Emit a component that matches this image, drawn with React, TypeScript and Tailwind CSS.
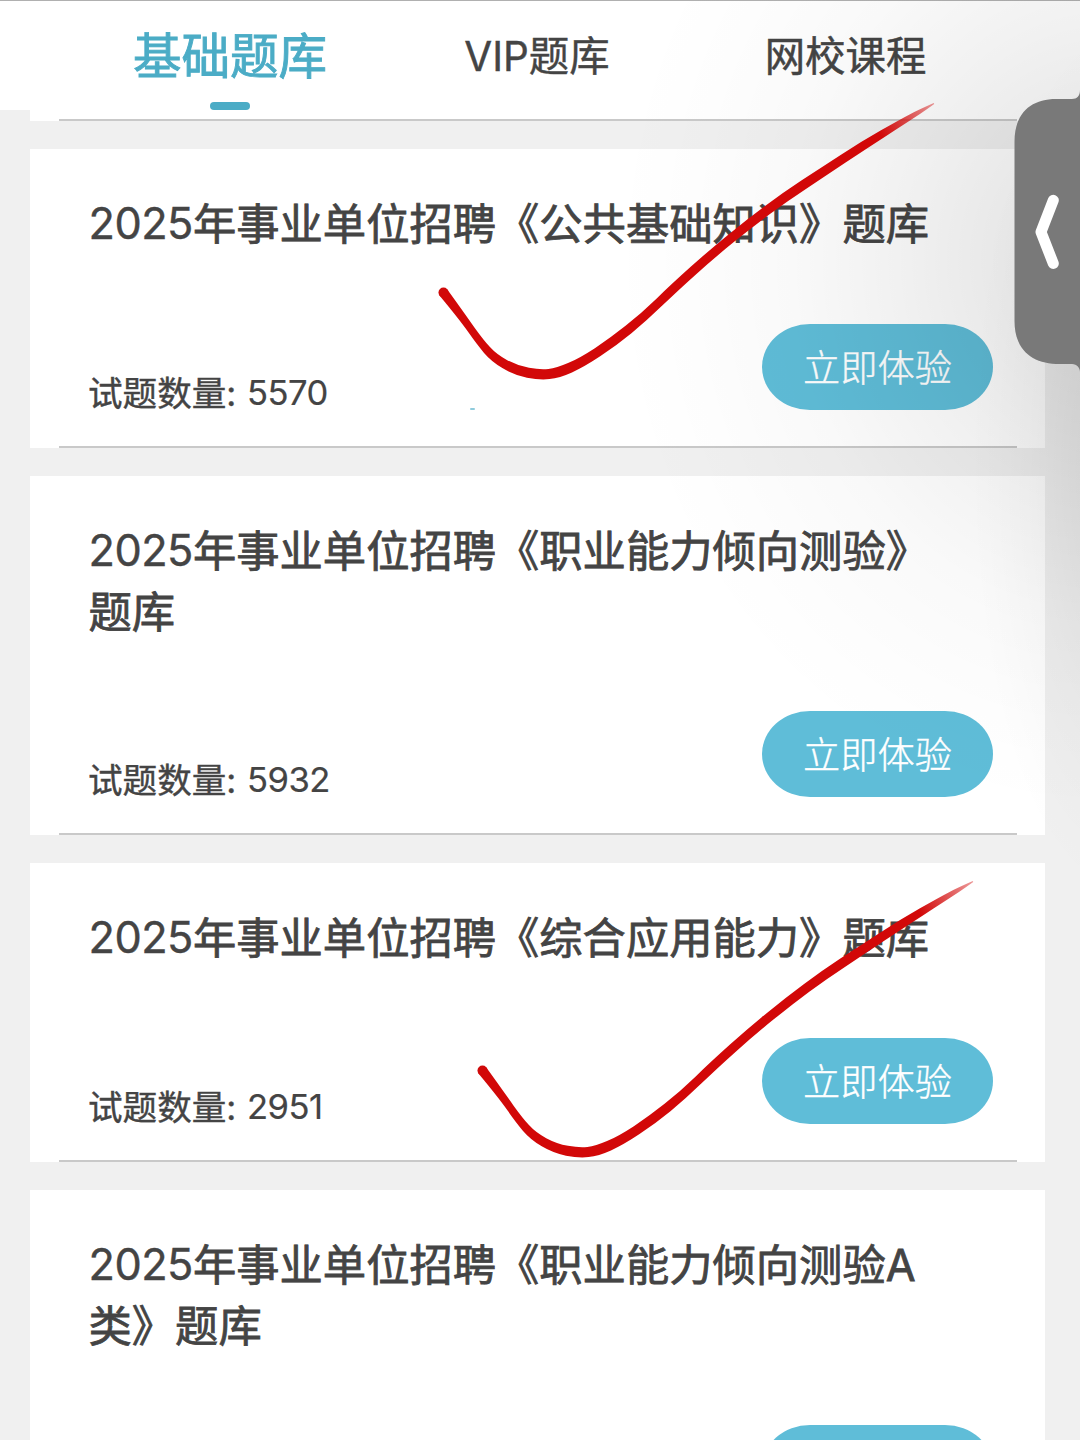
import React from 'react';
import clsx from 'clsx';

type Bank = {
  id: number;
  year: string;
  title: string;
  tail?: string;
  count?: string;
  tall?: boolean;
};

const tabs = ['基础题库', 'VIP题库', '网校课程'];

const banks: Bank[] = [
  { id: 1, year: '2025', title: '年事业单位招聘《公共基础知识》题库', count: '5570' },
  { id: 2, year: '2025', title: '年事业单位招聘《职业能力倾向测验》', tail: '题库', count: '5932', tall: true },
  { id: 3, year: '2025', title: '年事业单位招聘《综合应用能力》题库', count: '2951' },
  { id: 4, year: '2025', title: '年事业单位招聘《职业能力倾向测验A', tail: '类》题库', tall: true },
];

// x, y, half width of the pen
const stroke = [
  [4, 190, 5], [24, 216, 3.8], [41, 240, 4], [55, 256, 4.4], [77, 268.5, 5], [101, 273, 5.2],
  [119, 271, 5.2], [143, 260.5, 5], [174, 240, 4.8], [205, 215, 4.6], [236, 185, 4.5], [274, 151, 4.6],
  [311, 121, 4.7], [346, 95, 4.7], [384, 70, 4.8], [425, 43, 4.4], [463, 20, 3.2], [480, 10, 2.2], [495, 1.5, 0.5],
];

function outline(points: number[][]) {
  const side = (dir: number) =>
    points.map(([x, y, w], i) => {
      const a = points[Math.max(0, i - 1)];
      const b = points[Math.min(points.length - 1, i + 1)];
      const len = Math.hypot(b[0] - a[0], b[1] - a[1]);
      return [x - (dir * (b[1] - a[1]) * w) / len, y + (dir * (b[0] - a[0]) * w) / len];
    });
  const curve = (pts: number[][]) =>
    pts
      .slice(1)
      .map((p, i) => {
        const next = pts[i + 2];
        if (!next) return `L${p[0]} ${p[1]}`;
        return `Q${p[0]} ${p[1]} ${(p[0] + next[0]) / 2} ${(p[1] + next[1]) / 2}`;
      })
      .join('');
  const left = side(1);
  const right = side(-1).reverse();
  return `M${left[0][0]} ${left[0][1]}${curve(left)}L${right[0][0]} ${right[0][1]}${curve(right)}Z`;
}

function Tick({ id, className }: { id: string; className: string }) {
  return (
    <svg width="500" height="284" viewBox="0 0 500 284" className={clsx('pointer-events-none absolute overflow-visible', className)}>
      <defs>
        <linearGradient id={id} gradientUnits="userSpaceOnUse" x1="440" y1="30" x2="496" y2="1">
          <stop offset="0" stopColor="#d20808" />
          <stop offset="1" stopColor="#d20808" stopOpacity="0.4" />
        </linearGradient>
      </defs>
      <circle cx="4.5" cy="190.5" r="5" fill="#cf0a0a" />
      <path d={outline(stroke)} fill={`url(#${id})`} />
    </svg>
  );
}

function BankCard({ bank }: { bank: Bank }) {
  return (
    <article className={clsx('flex shrink-0 flex-col bg-white', bank.tall ? 'h-[359px]' : 'h-[299px]')}>
      <h2 className="pl-[58.5px] pt-[45px] text-[43.3px] leading-[61px] whitespace-nowrap [-webkit-text-stroke:0.8px_#444]">
        <span className="relative -top-px tracking-[-0.5px] [-webkit-text-stroke:0.4px_#444]">{bank.year}</span>
        {bank.title}
        {bank.tail && <span className="block">{bank.tail}</span>}
      </h2>
      <div className="mt-auto flex items-end justify-between pb-[36px] pl-[58px] pr-[52px]">
        <p className="text-[34.6px] leading-[34px] [-webkit-text-stroke:0.4px_#444]">
          {bank.count && (
            <>
              试题数量: <span className="relative -top-px ml-[1px] tracking-[-0.5px] [-webkit-text-stroke:0.2px_#444]">{bank.count}</span>
            </>
          )}
        </p>
        <button
          aria-label="立即体验"
          className="h-[86px] w-[231px] rounded-[48px/43px] bg-[#5fbdd8] pt-[3px] text-[37.2px] font-light text-white [-webkit-text-stroke:0.4px_#fff]"
        >
          {bank.count && '立即体验'}
        </button>
      </div>
      <hr className="ml-[29px] mr-[28px] h-[2px] border-0 bg-[#c9c9c9]" />
    </article>
  );
}

export default function App() {
  return (
    <div className="relative flex h-[1440px] w-[1080px] flex-col overflow-hidden bg-[#f0f0f0] font-['Inter','Noto_Sans_CJK_SC',sans-serif] text-[#444]">
      <header className="flex h-[110px] shrink-0 border-t border-[#b0b0b0] bg-white">
        {tabs.map((tab, i) => (
          <div
            key={tab}
            className={clsx(
              'flex flex-col items-center whitespace-nowrap',
              i === 0 && 'w-[460px] text-[48.5px] leading-[112px] text-[#4bacc6] [-webkit-text-stroke:0.9px_#4bacc6]',
              i === 1 && 'w-[154px] text-[40.4px] leading-[112px] [-webkit-text-stroke:0.4px_#444]',
              i === 2 && 'w-[463px] text-[40.4px] leading-[112px] [-webkit-text-stroke:0.5px_#444]',
            )}
          >
            <span>{tab}</span>
            {i === 0 && <i className="-mt-[11px] h-[8px] w-[40px] shrink-0 rounded-full bg-[#4bacc6]" />}
          </div>
        ))}
      </header>

      <main className="flex flex-col gap-[28px] pl-[30px] pr-[35px]">
        <div className="flex h-[11px] shrink-0 items-end bg-white">
          <hr className="ml-[29px] mr-[28px] h-[2px] grow border-0 bg-[#c9c9c9]" />
        </div>
        {banks.map((bank) => (
          <BankCard key={bank.id} bank={bank} />
        ))}
      </main>

      {/* soft shade around the drawer handle */}
      <div className="pointer-events-none absolute inset-0 bg-[radial-gradient(500px_560px_at_1110px_260px,rgba(0,0,0,0.115)_0%,rgba(0,0,0,0.095)_20%,rgba(0,0,0,0.053)_43%,rgba(0,0,0,0.023)_64%,rgba(0,0,0,0.008)_85%,transparent_100%)]" />
      <div className="pointer-events-none absolute inset-0 bg-[radial-gradient(150px_440px_at_1120px_460px,rgba(0,0,0,0.07)_0%,rgba(0,0,0,0.05)_30%,rgba(0,0,0,0.022)_60%,rgba(0,0,0,0.006)_85%,transparent_100%)]" />

      <i className="absolute left-[470px] top-[408px] h-[2px] w-[5px] rounded-full bg-[#8fcbdc]" />
      <Tick id="tick-a" className="left-[439px] top-[102px]" />
      <Tick id="tick-b" className="left-[478px] top-[880px]" />

      <svg width="66" height="290" viewBox="0 0 66 290" className="absolute right-0 top-[86px]">
        <path
          d="M66 4C66 10 63 13 58 13H42C18 13 .5 26 .5 56V235C.5 264 18 277 42 278H58C63 278 66 282 66 286Z"
          fill="#797979"
        />
        <path d="M39.3 114.3L27 146L39.3 177.5" fill="none" stroke="#fff" strokeWidth="11" strokeLinecap="round" strokeLinejoin="round" />
      </svg>
    </div>
  );
}
